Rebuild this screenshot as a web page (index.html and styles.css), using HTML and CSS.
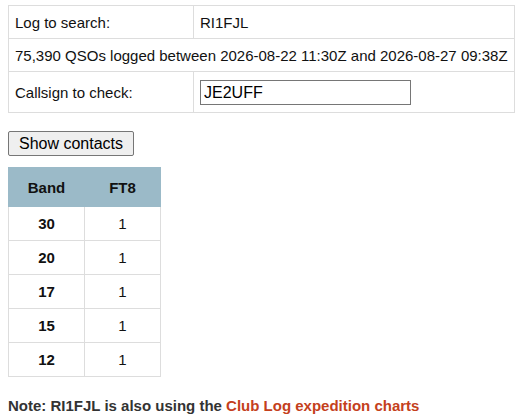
FILE: index.html
```html
<!DOCTYPE html>
<html lang="en">
<head>
    <meta charset="UTF-8">
    <title>Log search</title>
    <link rel="stylesheet" href="styles.css">
</head>
<body>

    <form class="search" onsubmit="return false;">
        <table class="search_table">
            <tr>
                <td class="label">Log to search:</td>
                <td>RI1FJL</td>
            </tr>
            <tr>
                <td colspan="2" class="span">75,390 QSOs logged between 2026-08-22 11:30Z and 2026-08-27 09:38Z</td>
            </tr>
            <tr>
                <td class="label">Callsign to check:</td>
                <td><input type="text" id="callsign" value="JE2UFF"></td>
            </tr>
        </table>
        <button type="submit" class="show_btn">Show contacts</button>
    </form>

    <table class="bands">
        <tr>
            <th>Band</th>
            <th>FT8</th>
        </tr>
        <tr><td class="band">30</td><td>1</td></tr>
        <tr><td class="band">20</td><td>1</td></tr>
        <tr><td class="band">17</td><td>1</td></tr>
        <tr><td class="band">15</td><td>1</td></tr>
        <tr><td class="band">12</td><td>1</td></tr>
    </table>

    <p class="note">Note: RI1FJL is also using the <a href="#">Club Log expedition charts</a></p>

</body>
</html>
```

FILE: styles.css
```css
body {
    margin: 5px 8px;
    font-family: "Liberation Sans", Arial, sans-serif;
    font-size: 15px;
    color: #111;
}
.search_table {
    border-collapse: collapse;
}
.search_table td {
    border: 1px solid #ddd;
    padding: 8px 6px 7px;
    line-height: 17px;
}
.search_table .span {
    white-space: nowrap;
}
.search_table .label {
    width: 172px;
}
#callsign {
    display: block;
    width: 211px;
    height: 25px;
    box-sizing: border-box;
    margin: 0;
    padding: 1px 3px;
    border: 1px solid #767676;
    font-family: "Liberation Sans", Arial, sans-serif;
    font-size: 16px;
    color: #000;
}
.show_btn {
    display: block;
    margin-top: 18px;
    width: 126px;
    height: 25px;
    padding: 0 6px;
    border: 1px solid #767676;
    border-radius: 2px;
    background: #efefef;
    font-family: "Liberation Sans", Arial, sans-serif;
    font-size: 16px;
    color: #000;
}
.bands {
    border-collapse: collapse;
    margin-top: 11px;
    width: 153px;
}
.bands th,
.bands td {
    border: 1px solid #ddd;
    padding: 8px 6px;
    line-height: 17px;
    text-align: center;
    width: 50%;
}
.bands th {
    background: #9bbac8;
    border-color: #9bbac8;
    padding: 11px 6px 10px;
}
.bands .band {
    font-weight: bold;
}
.note {
    margin: 20px 0 0;
    font-weight: bold;
    color: #333;
    line-height: 17px;
}
.note a {
    color: #c4401c;
    text-decoration: none;
}
```
